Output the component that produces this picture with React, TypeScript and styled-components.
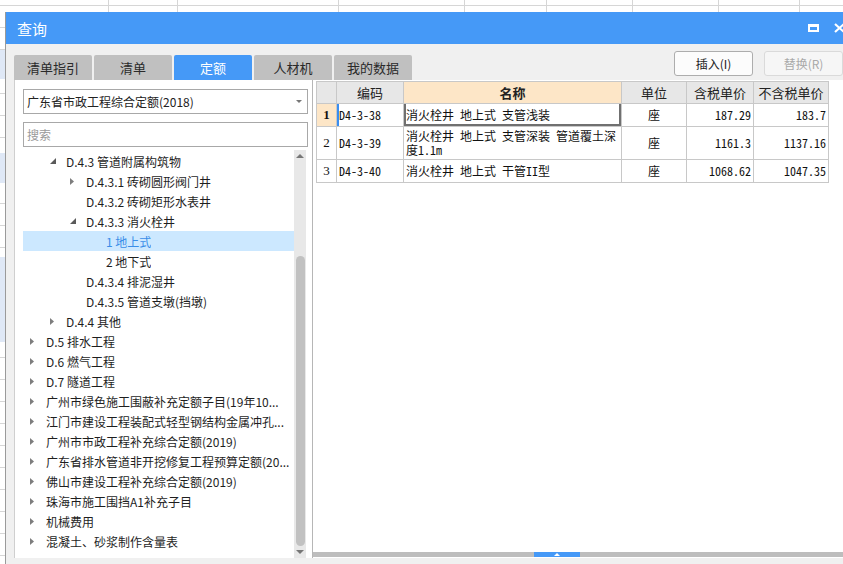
import styled, { createGlobalStyle } from 'styled-components';

const GlobalStyle = createGlobalStyle`
  html, body { margin: 0; padding: 0; overflow: hidden; }
  body {
    width: 843px;
    height: 564px;
    background: #fff;
    font-family: "Noto Sans CJK SC", "Microsoft YaHei", sans-serif;
    color: #222;
  }
  * { box-sizing: border-box; }
`;

const UI_FONT = '"Noto Sans CJK SC", "Microsoft YaHei", sans-serif';
const CELL_FONT = '"Noto Sans Mono CJK SC", "Liberation Mono", "Noto Sans CJK SC", monospace';

// spreadsheet behind the dialog
const sheetCols = [108, 177, 338, 464, 546, 632, 718, 799];

const Desktop = styled.div`
  width: 843px;
  height: 564px;
  overflow: hidden;
  padding: 12px 0 0 5px;
  background-color: #fff;
  background-image: ${sheetCols.map(() => 'linear-gradient(#d6d6d6, #d6d6d6)').join(', ')},
    linear-gradient(to bottom, transparent 0 50px, #dfe8f6 50px 79px, transparent 79px 153px, #dfe8f6 153px 183px, transparent 183px 257px, #dfe8f6 257px 342px, transparent 342px),
    repeating-linear-gradient(to bottom, transparent 0 5px, #d6d6d6 5px 6px, transparent 6px 22px);
  background-size: ${sheetCols.map(() => '1px 100%').join(', ')}, 5px 100%, 100% 100%;
  background-position: ${sheetCols.map((x) => `${x}px 0`).join(', ')}, 0 0, 0 0;
  background-repeat: no-repeat;
`;

const Dialog = styled.div`
  width: 853px;
  height: 560px;
  background: #f0f0f0;
  border-left: 1px solid #9a9a9a;
  display: flex;
  flex-direction: column;
`;

const TitleBar = styled.div`
  height: 32px;
  background: #4599f7;
  display: flex;
  align-items: center;
  padding: 0 13px 0 11px;
  flex-shrink: 0;
`;

const Title = styled.span`
  color: #fff;
  font-size: 15px;
  font-family: ${UI_FONT};
`;

const TitleIcons = styled.div`
  margin-left: auto;
  display: flex;
  align-items: center;
  gap: 15px;
`;

const MaxIcon = styled.span`
  width: 11px;
  height: 8px;
  border: 2px solid #fff;
  border-top-width: 3px;
`;

const Body = styled.div`
  padding: 7px 0 0 8px;
  display: flex;
  flex-direction: column;
  width: 837px;
`;

const TopRow = styled.div`
  height: 29px;
  display: flex;
  align-items: flex-start;
`;

const Tabs = styled.div`
  margin-top: 4px;
  display: flex;
  gap: 2px;
`;

const Tab = styled.div<{ $active?: boolean }>`
  width: 78px;
  height: 25px;
  border-radius: 2px 2px 0 0;
  background: ${(p) => (p.$active ? '#4599f7' : '#c0c0c0')};
  color: ${(p) => (p.$active ? '#fff' : '#2a2a2a')};
  font-size: 13px;
  display: flex;
  align-items: center;
  justify-content: center;
`;

const Buttons = styled.div`
  margin-left: auto;
  display: flex;
  gap: 11px;
`;

const Button = styled.div<{ $disabled?: boolean }>`
  width: 79px;
  height: 25px;
  border: 1px solid ${(p) => (p.$disabled ? '#dadada' : '#adadad')};
  border-radius: 3px;
  background: ${(p) => (p.$disabled ? '#f6f6f6' : '#fcfcfc')};
  color: ${(p) => (p.$disabled ? '#a9a9a9' : '#222')};
  font-size: 12px;
  display: flex;
  align-items: center;
  justify-content: center;
`;

const Main = styled.div`
  height: 478px;
  display: flex;
`;

const LeftPanel = styled.div`
  width: 299px;
  background: #fff;
  border-left: 1px solid #cfcfcf;
  border-right: 1px solid #b6b6b6;
  padding: 9px 4px 0 8px;
  display: flex;
  flex-direction: column;
`;

const Field = styled.div<{ $placeholder?: boolean }>`
  height: 25px;
  border: 1px solid #a8a8a8;
  display: flex;
  align-items: center;
  padding: 0 5px 0 3px;
  font-size: 12px;
  color: ${(p) => (p.$placeholder ? '#9a9a9a' : '#222')};
  & + & { margin-top: 8px; }
`;

const FieldText = styled.span`
  flex: 1;
`;

const Tree = styled.div`
  margin-top: 3px;
  flex: 1;
  display: flex;
  min-height: 0;
`;

const Rows = styled.div`
  width: 271px;
  padding-top: 1px;
`;

const Row = styled.div<{ $level: number; $selected?: boolean }>`
  height: 20px;
  display: flex;
  align-items: center;
  padding-left: ${(p) => 4 + p.$level * 20}px;
  background: ${(p) => (p.$selected ? '#cce8ff' : 'transparent')};
  color: ${(p) => (p.$selected ? '#3a8de8' : '#1e1e1e')};
  font-size: 12px;
  white-space: nowrap;
`;

const Arrow = styled.span`
  width: 19px;
  height: 20px;
  flex-shrink: 0;
  display: flex;
  align-items: center;
  padding-left: 3px;
`;

const Label = styled.span`
  overflow: hidden;
`;

const VScroll = styled.div`
  width: 12px;
  background: #e8e8e8;
  display: flex;
  flex-direction: column;
  align-items: center;
`;

const ScrollArrow = styled.div`
  height: 12px;
  display: flex;
  align-items: center;
  justify-content: center;
`;

const VThumb = styled.div`
  margin-top: 94px;
  width: 9px;
  height: 290px;
  border-radius: 5px;
  background: #c1c1c1;
`;

const RightPanel = styled.div`
  flex: 1;
  background: #fff;
  display: flex;
  flex-direction: column;
`;

const TableArea = styled.div`
  flex: 1;
  padding: 1px 0 0 3px;
`;

const Grid = styled.div`
  display: grid;
  grid-template-columns: 20px 67px 218px 65px 67px 75px;
  grid-template-rows: 22px 23px 33px 23px;
  width: max-content;
  border-top: 1px solid #c8c8c8;
  border-left: 1px solid #c8c8c8;
  font-family: ${CELL_FONT};
  font-size: 12px;
  color: #111;
`;

type Align = 'left' | 'center' | 'right';

const Cell = styled.div<{ $align?: Align; $bg?: string; $bold?: boolean; $top?: boolean }>`
  border-right: 1px solid #c8c8c8;
  border-bottom: 1px solid #c8c8c8;
  background: ${(p) => p.$bg ?? '#fff'};
  font-weight: ${(p) => (p.$bold ? 700 : 400)};
  display: flex;
  align-items: ${(p) => (p.$top ? 'flex-start' : 'center')};
  justify-content: ${(p) => (p.$align === 'right' ? 'flex-end' : p.$align === 'center' ? 'center' : 'flex-start')};
  padding: ${(p) => (p.$top ? '2px 2px 0 2px' : '0 2px')};
  line-height: 14px;
  white-space: nowrap;
`;

const HeadCell = styled(Cell)`
  font-family: ${UI_FONT};
  font-size: 13px;
  color: #222;
`;

const RowNum = styled(Cell)`
  font-family: "Liberation Serif", serif;
  font-size: 13px;
  justify-content: center;
`;

const CodeCell = styled(Cell)<{ $marked?: boolean }>`
  box-shadow: ${(p) => (p.$marked ? 'inset 2px 0 0 #3a8ef0' : 'none')};
`;

const NameCell = styled(Cell)<{ $current?: boolean }>`
  flex-direction: column;
  align-items: flex-start;
  justify-content: ${(p) => (p.$top ? 'flex-start' : 'center')};
  box-shadow: ${(p) =>
    p.$current ? 'inset 2px 0 0 #707070, inset -2px 0 0 #707070, inset 0 -2px 0 #707070' : 'none'};
`;

const HScroll = styled.div`
  height: 5px;
  background: #bdbdbd;
  display: flex;
  margin-bottom: 1px;
`;

const HThumb = styled.div`
  margin-left: 221px;
  width: 46px;
  height: 5px;
  background: #4599f7;
  display: flex;
  align-items: center;
  justify-content: center;
`;

const ClosedArrow = () => (
  <svg width="4" height="7" viewBox="0 0 4 7">
    <polygon points="0,0 4,3.5 0,7" fill="#7d7d7d" />
  </svg>
);

const OpenArrow = () => (
  <svg width="6" height="6" viewBox="0 0 6 6">
    <polygon points="6,0 6,6 0,6" fill="#5a5a5a" />
  </svg>
);

const Tri = ({ dir, w, h, color }: { dir: 'up' | 'down'; w: number; h: number; color: string }) => (
  <svg width={w} height={h} viewBox={`0 0 ${w} ${h}`}>
    <polygon points={dir === 'up' ? `0,${h} ${w / 2},0 ${w},${h}` : `0,0 ${w},0 ${w / 2},${h}`} fill={color} />
  </svg>
);

type Node = { level: number; label: string; arrow?: 'open' | 'closed'; selected?: boolean };

const tree: Node[] = [
  { level: 1, label: 'D.4.3 管道附属构筑物', arrow: 'open' },
  { level: 2, label: 'D.4.3.1 砖砌圆形阀门井', arrow: 'closed' },
  { level: 2, label: 'D.4.3.2 砖砌矩形水表井' },
  { level: 2, label: 'D.4.3.3 消火栓井', arrow: 'open' },
  { level: 3, label: '1 地上式', selected: true },
  { level: 3, label: '2 地下式' },
  { level: 2, label: 'D.4.3.4 排泥湿井' },
  { level: 2, label: 'D.4.3.5 管道支墩(挡墩)' },
  { level: 1, label: 'D.4.4 其他', arrow: 'closed' },
  { level: 0, label: 'D.5 排水工程', arrow: 'closed' },
  { level: 0, label: 'D.6 燃气工程', arrow: 'closed' },
  { level: 0, label: 'D.7 隧道工程', arrow: 'closed' },
  { level: 0, label: '广州市绿色施工围蔽补充定额子目(19年10...', arrow: 'closed' },
  { level: 0, label: '江门市建设工程装配式轻型钢结构金属冲孔...', arrow: 'closed' },
  { level: 0, label: '广州市市政工程补充综合定额(2019)', arrow: 'closed' },
  { level: 0, label: '广东省排水管道非开挖修复工程预算定额(20...', arrow: 'closed' },
  { level: 0, label: '佛山市建设工程补充综合定额(2019)', arrow: 'closed' },
  { level: 0, label: '珠海市施工围挡A1补充子目', arrow: 'closed' },
  { level: 0, label: '机械费用', arrow: 'closed' },
  { level: 0, label: '混凝土、砂浆制作含量表', arrow: 'closed' },
];

type Item = { code: string; name: string[]; unit: string; withTax: string; noTax: string };

const items: Item[] = [
  { code: 'D4-3-38', name: ['消火栓井 地上式 支管浅装'], unit: '座', withTax: '187.29', noTax: '183.7' },
  { code: 'D4-3-39', name: ['消火栓井 地上式 支管深装 管道覆土深', '度1.1m'], unit: '座', withTax: '1161.3', noTax: '1137.16' },
  { code: 'D4-3-40', name: ['消火栓井 地上式 干管II型'], unit: '座', withTax: '1068.62', noTax: '1047.35' },
];

const tabs = ['清单指引', '清单', '定额', '人材机', '我的数据'];

const HEAD_BG = '#e7e7e7';
const PEACH = '#fde6c7';

export default function App() {
  return (
    <>
      <GlobalStyle />
      <Desktop>
        <Dialog>
          <TitleBar>
            <Title>查询</Title>
            <TitleIcons>
              <MaxIcon />
              <svg width="11" height="10" viewBox="0 0 11 10">
                <path d="M1 1 L10 9 M10 1 L1 9" stroke="#fff" strokeWidth="2.2" />
              </svg>
            </TitleIcons>
          </TitleBar>
          <Body>
            <TopRow>
              <Tabs>
                {tabs.map((t) => (
                  <Tab key={t} $active={t === '定额'}>{t}</Tab>
                ))}
              </Tabs>
              <Buttons>
                <Button>插入(I)</Button>
                <Button $disabled>替换(R)</Button>
              </Buttons>
            </TopRow>
            <Main>
              <LeftPanel>
                <Field>
                  <FieldText>广东省市政工程综合定额(2018)</FieldText>
                  <Tri dir="down" w={6} h={3} color="#777" />
                </Field>
                <Field $placeholder>搜索</Field>
                <Tree>
                  <Rows>
                    {tree.map((n) => (
                      <Row key={n.label} $level={n.level} $selected={n.selected}>
                        <Arrow>
                          {n.arrow === 'open' && <OpenArrow />}
                          {n.arrow === 'closed' && <ClosedArrow />}
                        </Arrow>
                        <Label>{n.label}</Label>
                      </Row>
                    ))}
                  </Rows>
                  <VScroll>
                    <ScrollArrow>
                      <Tri dir="up" w={8} h={4} color="#777" />
                    </ScrollArrow>
                    <VThumb />
                    <ScrollArrow style={{ marginTop: 'auto' }}>
                      <Tri dir="down" w={8} h={4} color="#777" />
                    </ScrollArrow>
                  </VScroll>
                </Tree>
              </LeftPanel>
              <RightPanel>
                <TableArea>
                  <Grid>
                    <HeadCell $bg={HEAD_BG} />
                    <HeadCell $bg={HEAD_BG} $align="center">编码</HeadCell>
                    <HeadCell $bg={PEACH} $align="center" $bold>名称</HeadCell>
                    <HeadCell $bg={HEAD_BG} $align="center">单位</HeadCell>
                    <HeadCell $bg={HEAD_BG} $align="center">含税单价</HeadCell>
                    <HeadCell $bg={HEAD_BG} $align="center">不含税单价</HeadCell>
                    {items.map((it, i) => {
                      const first = i === 0;
                      const multi = it.name.length > 1;
                      return [
                        <RowNum key={`n${i}`} $bg={first ? PEACH : '#fff'} $bold={first}>{i + 1}</RowNum>,
                        <CodeCell key={`c${i}`} $marked={first}>{it.code}</CodeCell>,
                        <NameCell key={`m${i}`} $current={first} $top={multi}>
                          {it.name.map((l) => (
                            <span key={l}>{l}</span>
                          ))}
                        </NameCell>,
                        <Cell key={`u${i}`} $align="center">{it.unit}</Cell>,
                        <Cell key={`w${i}`} $align="right">{it.withTax}</Cell>,
                        <Cell key={`t${i}`} $align="right">{it.noTax}</Cell>,
                      ];
                    })}
                  </Grid>
                </TableArea>
                <HScroll>
                  <HThumb>
                    <Tri dir="up" w={6} h={3} color="#fff" />
                  </HThumb>
                </HScroll>
              </RightPanel>
            </Main>
          </Body>
        </Dialog>
      </Desktop>
    </>
  );
}
